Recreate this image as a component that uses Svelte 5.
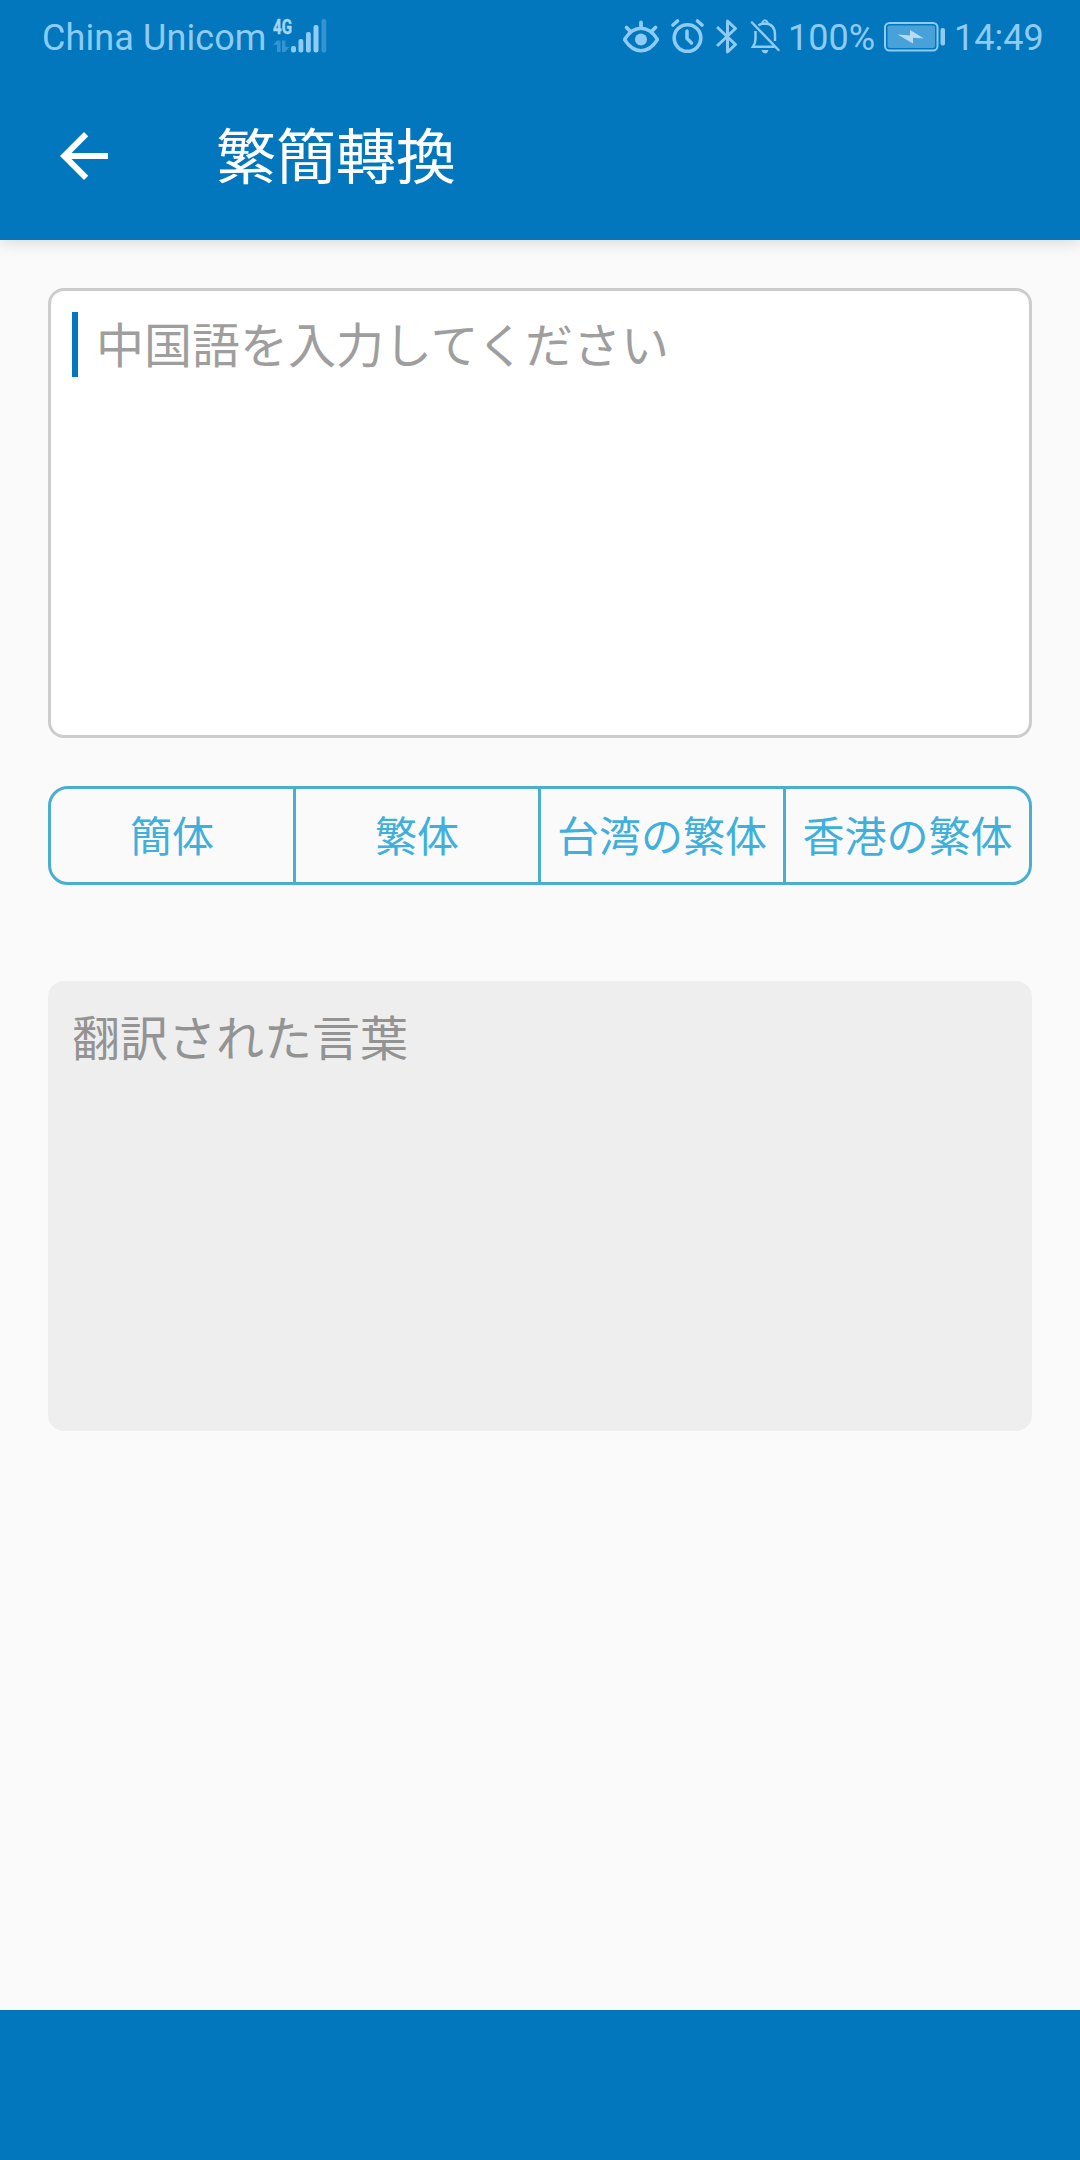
<script lang="ts">
	const carrier = 'China Unicom';
	const battery = '100%';
	const time = '14:49';
	const title = '繁簡轉換';
	const placeholder = '中国語を入力してください';

	const variants = [
		{ id: 'cn', label: '簡体' },
		{ id: 't', label: '繁体' },
		{ id: 'tw', label: '台湾の繁体' },
		{ id: 'hk', label: '香港の繁体' }
	];

	let result = $state('翻訳された言葉');
</script>

<div class="screen">
	<header>
		<div class="status-bar">
			<span class="carrier">{carrier}</span>
			<svg class="signal" width="54" height="46" viewBox="0 -10 54 46">
				<text x="0" y="16" textLength="19" lengthAdjust="spacingAndGlyphs">4G</text>
				<g opacity="0.35">
					<path d="M0 27 L4 22.500 H7.500 V34 H4 V27Z" />
					<path d="M9 22.500 H12.500 V29 H16.500 L12 34 H9Z" />
				</g>
				<rect x="18" y="28" width="5" height="6.500" rx="2.200" />
				<rect x="25.500" y="21" width="4.800" height="13.500" rx="2" />
				<rect x="33" y="14" width="4.800" height="20.500" rx="2" />
				<rect x="40.500" y="7" width="5" height="27.500" rx="2" />
				<rect x="48.500" y="1" width="4.800" height="33.500" rx="2" opacity="0.35" />
			</svg>

			<div class="status-icons">
				<svg width="36" height="34" viewBox="0 0 36 34" fill="none" stroke="currentColor">
					<path d="M1.500 20.500 C11 5.500 25 5.500 34.500 20.500 C25 35.500 11 35.500 1.500 20.500Z" stroke-width="3.400" stroke-linejoin="round" />
					<circle cx="18" cy="20.500" r="6" fill="currentColor" stroke="none" />
					<path d="M18 8 V3.500 M7 12 L3.500 8.500 M29 12 L32.500 8.500" stroke-width="3.800" stroke-linecap="round" />
				</svg>
				<svg class="alarm" width="34" height="36" viewBox="0 0 34 36" fill="none" stroke="currentColor" stroke-linecap="round">
					<circle cx="16.500" cy="20" r="13.300" stroke-width="3.600" />
					<path d="M16 13 V20.500 L20.500 25" stroke-width="3.500" stroke-linejoin="round" />
					<path d="M2 7 L6.500 3 M31 7 L26.500 3" stroke-width="3.600" />
				</svg>
				<svg class="bluetooth" width="24" height="36" viewBox="0 0 24 36" fill="none" stroke="currentColor">
					<path d="M1 9 L19.500 26.500 L11.500 34 V3 L19.500 10.500 L1 28" stroke-width="3" stroke-linejoin="round" />
				</svg>
				<svg class="bell" width="30" height="35" viewBox="0 0 30 35" fill="none" stroke="currentColor">
					<path d="M8.500 6.500 Q10.500 4.500 15 4.500 Q25 5 25 16 V22 M5.500 12 V20 Q5.500 24 3 27.800 H24.500" stroke-width="2.500" />
					<path d="M12 4 Q15 -1.500 18 4" stroke-width="2" />
					<path d="M2 3.500 L28.500 31" stroke-width="2.500" stroke-linecap="round" />
					<path d="M11.500 31 H18.500 Q17.500 34.500 15 34.500 Q12.500 34.500 11.500 31Z" fill="currentColor" stroke="none" />
				</svg>
				<span class="level">{battery}</span>
				<svg class="battery" width="62" height="30" viewBox="0 0 62 30">
					<rect x="1" y="1" width="52.500" height="27.500" rx="4.500" fill="none" stroke="currentColor" stroke-width="2" />
					<rect x="3.500" y="3.500" width="47.500" height="22.500" rx="2" opacity="0.5" />
					<path d="M13.500 12.500 L26 13.500 V8 L40 16.500 L29 15.800 V21.500Z" fill="#b9dcf5" />
					<rect x="56.500" y="6" width="4.500" height="17.500" rx="2" />
				</svg>
				<span class="time">{time}</span>
			</div>
		</div>

		<div class="toolbar">
			<button class="back" aria-label="戻る">
				<svg width="48" height="48" viewBox="4 4 16 16" fill="currentColor">
					<path d="M20 11H7.830l5.590-5.590L12 4l-8 8 8 8 1.410-1.410L7.830 13H20v-2z" />
				</svg>
			</button>
			<h1>{title}</h1>
		</div>
	</header>

	<main>
		<div class="box input">
			<span class="caret"></span>
			<span class="hint">{placeholder}</span>
		</div>

		<div class="segments">
			{#each variants as variant (variant.id)}
				<button>{variant.label}</button>
			{/each}
		</div>

		<div class="box output">{result}</div>
	</main>

	<footer></footer>
</div>

<style>
	:global(body) {
		background: #fafafa;
	}

	.screen {
		display: flex;
		flex-direction: column;
		width: 1080px;
		height: 2160px;
		background: #fafafa;
		font-family: Roboto, 'Noto Sans CJK JP', sans-serif;
	}

	svg {
		display: block;
		flex: none;
	}

	button {
		margin: 0;
		padding: 0;
		border: none;
		background: none;
		color: inherit;
		font: inherit;
	}

	/* Header */
	header {
		flex: none;
		height: 240px;
		background: #0277bd;
		box-shadow: 0 3px 14px rgba(0, 0, 0, 0.13);
	}

	.status-bar {
		display: flex;
		align-items: flex-start;
		height: 72px;
		padding: 0 36px 0 42px;
		box-sizing: border-box;
		color: #8ecbf5;
		fill: currentColor;
		font-size: 36px;
		line-height: 42px;
		white-space: nowrap;
	}

	.carrier,
	.level,
	.time {
		margin-top: 17px;
	}

	.carrier {
		width: 231px;
		letter-spacing: 0.1px;
	}

	.signal {
		margin-top: 8px;
	}

	.signal text {
		font-family: Roboto, sans-serif;
		font-size: 21px;
		font-weight: 700;
		fill: #a5d5f7;
		stroke: #a5d5f7;
		stroke-width: 0.5px;
	}

	.status-icons {
		display: flex;
		align-items: flex-start;
		margin-left: auto;
	}

	.status-icons > svg {
		margin-top: 19px;
	}

	.status-icons > .alarm {
		margin-left: 12px;
		margin-top: 18px;
	}

	.status-icons > .bluetooth {
		margin-left: 11px;
		margin-top: 18px;
	}

	.status-icons > .bell {
		margin-left: 10px;
	}

	.level {
		width: 90px;
		margin-left: 8px;
	}

	.status-icons > .battery {
		margin-left: 6px;
		margin-top: 22px;
	}

	.time {
		width: 90px;
		margin-left: 8px;
	}

	.toolbar {
		display: flex;
		align-items: center;
		height: 168px;
		padding-left: 60px;
		color: #fff;
	}

	h1 {
		margin: 0 0 0 108px;
		padding-top: 6px;
		font-size: 60px;
		font-weight: 400;
		line-height: 80px;
	}

	/* Content */
	main {
		flex: 1;
		display: flex;
		flex-direction: column;
		padding: 48px;
	}

	.box {
		box-sizing: border-box;
		height: 450px;
		border-radius: 16px;
		font-size: 48px;
		line-height: 66px;
	}

	.input {
		display: flex;
		padding: 21px;
		border: 3px solid #ccc;
		background: #fff;
		color: #9e9e9e;
	}

	.caret {
		width: 6px;
		height: 65px;
		margin-right: 18px;
		background: #0277bd;
	}

	.hint {
		padding-top: 2px;
	}

	.segments {
		display: grid;
		grid-template-columns: 245px 245px 245px 1fr;
		box-sizing: border-box;
		height: 99px;
		margin: 48px 0 96px;
		border: 3px solid #4aaed3;
		border-radius: 20px;
		color: #3fb0dc;
		font-size: 42px;
		line-height: 60px;
	}

	.segments button {
		padding-top: 4px;
		white-space: nowrap;
	}

	.segments button:not(:last-child) {
		border-right: 3px solid #4aaed3;
	}

	.output {
		padding: 26px 24px;
		background: #eee;
		color: #939393;
	}

	footer {
		height: 150px;
		background: #0277bd;
	}
</style>
